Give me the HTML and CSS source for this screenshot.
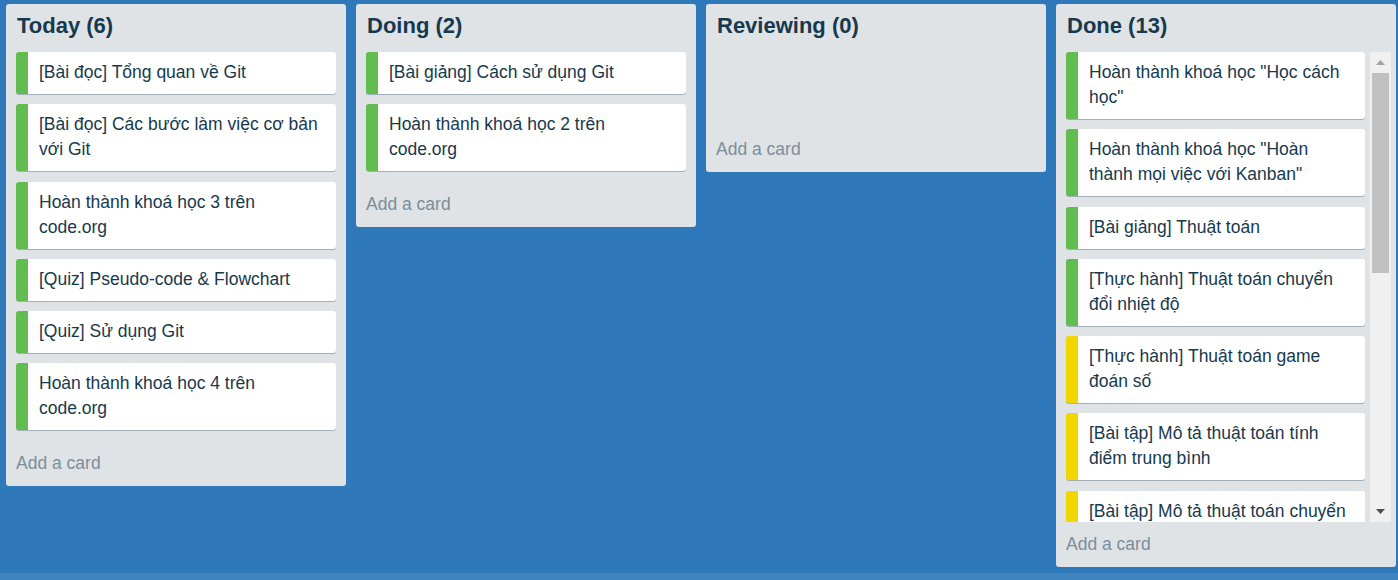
FILE: index.html
```html
<!DOCTYPE html>
<html lang="vi">
<head>
<meta charset="utf-8">
<title>Kanban</title>
<link rel="stylesheet" href="styles.css">
</head>
<body>
<div class="page">
  <main class="board">
    <section class="column">
      <h2 class="column-title">Today (6)</h2>
      <div class="list">
        <div class="card green">[Bài đọc] Tổng quan về Git</div>
        <div class="card green">[Bài đọc] Các bước làm việc cơ bản với Git</div>
        <div class="card green">Hoàn thành khoá học 3 trên code.org</div>
        <div class="card green">[Quiz] Pseudo-code &amp; Flowchart</div>
        <div class="card green">[Quiz] Sử dụng Git</div>
        <div class="card green">Hoàn thành khoá học 4 trên code.org</div>
      </div>
      <div class="add-card">Add a card</div>
    </section>
    <section class="column">
      <h2 class="column-title">Doing (2)</h2>
      <div class="list">
        <div class="card green">[Bài giảng] Cách sử dụng Git</div>
        <div class="card green">Hoàn thành khoá học 2 trên code.org</div>
      </div>
      <div class="add-card">Add a card</div>
    </section>
    <section class="column">
      <h2 class="column-title">Reviewing (0)</h2>
      <div class="list list-empty"></div>
      <div class="add-card">Add a card</div>
    </section>
    <section class="column">
      <h2 class="column-title">Done (13)</h2>
      <div class="scroll-list">
        <div class="scroll-cards">
          <div class="card green">Hoàn thành khoá học "Học cách học"</div>
          <div class="card green">Hoàn thành khoá học "Hoàn thành mọi việc với Kanban"</div>
          <div class="card green">[Bài giảng] Thuật toán</div>
          <div class="card green">[Thực hành] Thuật toán chuyển đổi nhiệt độ</div>
          <div class="card yellow">[Thực hành] Thuật toán game đoán số</div>
          <div class="card yellow">[Bài tập] Mô tả thuật toán tính điểm trung bình</div>
          <div class="card yellow">[Bài tập] Mô tả thuật toán chuyển đổi nhiệt độ</div>
        </div>
        <div class="scrollbar">
          <div class="sb-btn"><svg width="9" height="5" viewBox="0 0 9 5"><path d="M0 5 L4.5 0 L9 5 Z" fill="#a3a3a3"/></svg></div>
          <div class="sb-track"><div class="sb-thumb"></div></div>
          <div class="sb-btn"><svg width="9" height="5" viewBox="0 0 9 5"><path d="M0 0 L9 0 L4.5 5 Z" fill="#505050"/></svg></div>
        </div>
      </div>
      <div class="add-card">Add a card</div>
    </section>
  </main>
  <div class="bottom-strip"></div>
</div>
</body>
</html>
```
FILE: styles.css
```css
* { box-sizing: border-box; }
html, body {
  margin: 0;
  padding: 0;
  height: 100%;
}
body {
  background: #2f79ba;
  font-family: "Liberation Sans", Arial, sans-serif;
  overflow: hidden;
}
.page {
  display: flex;
  flex-direction: column;
  height: 580px;
}
.board {
  flex: 1;
  display: flex;
  align-items: flex-start;
  gap: 10px;
  padding: 4px 6px 0 6px;
}
.bottom-strip {
  height: 7px;
  background: #3f83bf;
}
.column {
  width: 340px;
  flex: 0 0 340px;
  background: #dfe3e6;
  border-radius: 3px;
  display: flex;
  flex-direction: column;
}
.column-title {
  margin: 0;
  padding: 9px 10px 13px 11px;
  font-size: 22px;
  line-height: 26px;
  font-weight: bold;
  color: #17394d;
}
.list {
  padding: 0 10px;
  display: flex;
  flex-direction: column;
  gap: 10.3px;
}
.list-empty {
  min-height: 64px;
}
.card {
  background: #fff;
  border-radius: 3px;
  border-left: 12px solid #61bd4f;
  box-shadow: 0 1px 0 #a3afb9;
  padding: 8px 10px 9px 11px;
  font-size: 17.5px;
  line-height: 25px;
  color: #17394d;
}
.card.green { border-left-color: #61bd4f; }
.card.yellow { border-left-color: #f2d600; }
.add-card {
  margin-top: 10px;
  padding: 11px 10px 10px 10px;
  font-size: 17.5px;
  line-height: 25px;
  color: #7d8d9a;
}
.scroll-list {
  display: flex;
  height: 470px;
  margin: 0 5px 0 10px;
  gap: 5px;
}
.scroll-cards {
  flex: 1;
  overflow: hidden;
  display: flex;
  flex-direction: column;
  gap: 10.3px;
  padding-bottom: 2px;
}
.scroll-cards .card { flex: 0 0 auto; }
.scrollbar {
  width: 21px;
  flex: 0 0 21px;
  background: #f0f0f0;
  display: flex;
  flex-direction: column;
}
.sb-btn {
  height: 21px;
  display: flex;
  align-items: center;
  justify-content: center;
}
.sb-track {
  flex: 1;
  padding: 0 2px;
}
.sb-thumb {
  height: 200px;
  background: #c1c1c1;
}
.scroll-list + .add-card {
  margin-top: 0;
  padding-top: 10px;
  padding-bottom: 10px;
}
```
